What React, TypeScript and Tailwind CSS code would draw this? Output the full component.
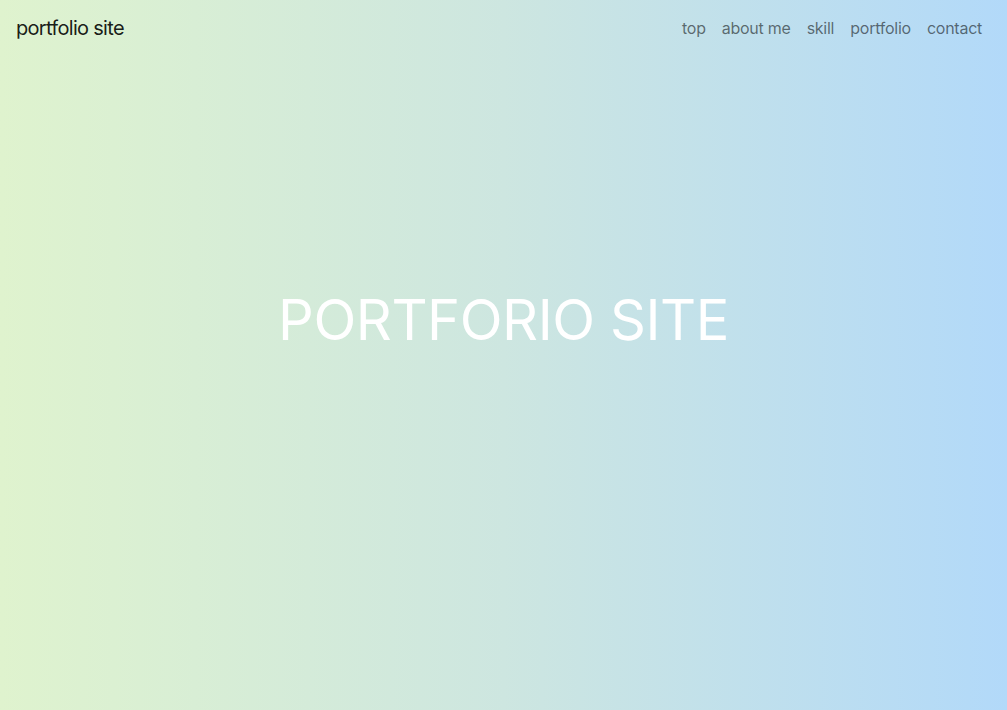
export default function App() {
  const links = ["top", "about me", "skill", "portfolio", "contact"];
  return (
    <div
      className="min-h-screen w-full flex flex-col bg-[linear-gradient(to_right,#dff3ce,#cde6e0_50%,#b2d9f9)]"
      style={{ fontFamily: "Inter, 'Noto Sans', sans-serif" }}
    >
      <nav className="h-14 flex items-center justify-between pl-4 pr-[17px]">
        <a className="text-[20px] leading-[30px] tracking-[-0.7px] text-black/90">portfolio site</a>
        <ul className="flex items-center">
          {links.map((l) => (
            <li key={l}>
              <a className="block px-2 py-2 text-[16px] leading-6 tracking-[-0.25px] text-black/55">{l}</a>
            </li>
          ))}
        </ul>
      </nav>
      <main className="flex justify-center pt-[231px]">
        <h1 className="text-[56px] leading-[1.2] tracking-[-0.45px] text-white font-normal">PORTFORIO SITE</h1>
      </main>
    </div>
  );
}
